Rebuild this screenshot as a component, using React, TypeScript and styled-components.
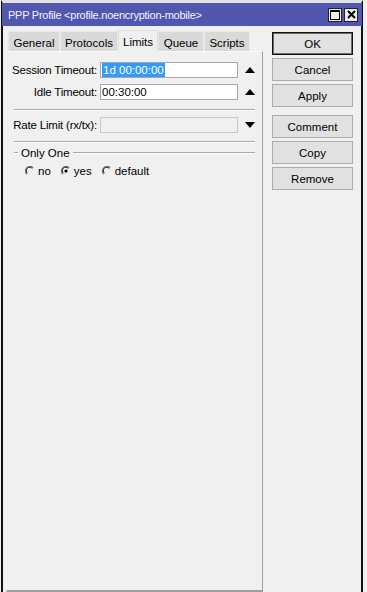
import React from "react";
import styled, { createGlobalStyle } from "styled-components";

const Global = createGlobalStyle`
  html, body { margin: 0; padding: 0; background: #f0f0f0; }
  body { font-family: "Liberation Sans", Arial, sans-serif; font-size: 11px; color: #000; }
`;

const Window = styled.div`
  margin-left: 1px;
  width: 362px;
  height: 600px;
  border-left: 2px solid #111;
  border-right: 2px solid #111;
  border-top: 3px solid #e4e4e4;
  background: #f0f0f0;
  display: flex;
  flex-direction: column;
  box-sizing: border-box;
`;

const TitleBar = styled.div`
  height: 23px;
  background: #5157ae;
  color: #f4f4ff;
  font-size: 11px;
  letter-spacing: -0.25px;
  display: flex;
  align-items: center;
  justify-content: space-between;
  padding: 0 4px 0 6px;
  margin: 0 -1px;
`;

const TitleButtons = styled.div`
  display: flex;
  gap: 2px;
`;

const TitleBtn = styled.div`
  width: 14px;
  height: 14px;
  box-sizing: border-box;
  background: #ececec;
  border: 1px solid #222;
  display: flex;
  align-items: center;
  justify-content: center;
`;

const Body = styled.div`
  display: flex;
  flex: 1;
  padding: 3px 0 0 3px;
  gap: 9px;
  min-height: 0;
`;

const LeftCol = styled.div`
  width: 257px;
  display: flex;
  flex-direction: column;
  padding-bottom: 8px;
`;

const TabRow = styled.div`
  display: flex;
  align-items: flex-end;
  height: 22px;
  padding-left: 2px;
`;

const Tab = styled.div<{ $w: number; $active?: boolean }>`
  width: ${(p) => p.$w}px;
  height: ${(p) => (p.$active ? 22 : 20)}px;
  box-sizing: border-box;
  background: ${(p) => (p.$active ? "#f0f0f0" : "#d9d9d9")};
  border: 1px solid ${(p) => (p.$active ? "#dcdcdc" : "#e9e9e9")};
  border-bottom: none;
  display: flex;
  align-items: center;
  justify-content: center;
  padding-top: ${(p) => (p.$active ? 0 : 2)}px;
  font-size: 11.5px;
  margin-bottom: ${(p) => (p.$active ? -1 : 0)}px;
  position: relative;
  z-index: ${(p) => (p.$active ? 1 : 0)};
`;

const Panel = styled.div`
  flex: 1;
  border-top: 1px solid #fafafa;
  border-left: 1px solid #f6f6f6;
  border-right: 1px solid #a0a0a0;
  border-bottom: 2px solid #a0a0a0;
  padding: 10px 0 0 0;
  display: flex;
  flex-direction: column;
`;

const FieldRow = styled.div<{ $mt?: number }>`
  display: grid;
  grid-template-columns: 90px 138px 17px;
  column-gap: 3px;
  align-items: center;
  height: 16px;
  margin-top: ${(p) => p.$mt ?? 0}px;
`;

const Label = styled.div`
  text-align: right;
  white-space: nowrap;
  font-size: 11.5px;
  letter-spacing: -0.2px;
`;

const Input = styled.div<{ $disabled?: boolean }>`
  height: 16px;
  box-sizing: border-box;
  background: ${(p) => (p.$disabled ? "#f0f0f0" : "#fff")};
  border: 1px solid ${(p) => (p.$disabled ? "#c8c8c8" : "#a6a6a6")};
  display: flex;
  align-items: center;
  padding-left: 1px;
  font-size: 11.5px;
`;

const Selected = styled.span`
  background: #3399ff;
  color: #fff;
  padding: 0 1px;
  line-height: 14px;
`;

const ArrowBox = styled.div`
  display: flex;
  align-items: center;
  justify-content: center;
`;

const Separator = styled.div<{ $mt: number }>`
  margin: ${(p) => p.$mt}px 7px 0 7px;
  border-top: 1px solid #a8a8a8;
  border-bottom: 1px solid #fff;
`;

const GroupHead = styled.div`
  display: flex;
  align-items: center;
  margin: 4px 7px 0 7px;
  gap: 3px;
  font-size: 11.5px;
`;

const GroupLine = styled.div<{ $w?: number }>`
  ${(p) => (p.$w ? `width: ${p.$w}px;` : "flex: 1;")}
  border-top: 1px solid #a8a8a8;
  border-bottom: 1px solid #fff;
`;

const RadioRow = styled.div`
  display: flex;
  align-items: center;
  margin: 6px 0 0 18px;
  gap: 10px;
  font-size: 11.5px;
`;

const RadioItem = styled.label`
  display: flex;
  align-items: center;
  gap: 3px;
`;

const RightCol = styled.div`
  width: 81px;
  display: flex;
  flex-direction: column;
  padding-top: 3px;
`;

const Button = styled.div<{ $default?: boolean; $mt?: number }>`
  height: 23px;
  box-sizing: border-box;
  margin-top: ${(p) => p.$mt ?? 3}px;
  background: #e1e1e1;
  border: 1px solid ${(p) => (p.$default ? "#111" : "#adadad")};
  box-shadow: ${(p) => (p.$default ? "inset 0 0 0 1px #6a6a6a" : "none")};
  display: flex;
  align-items: center;
  justify-content: center;
  font-size: 11.5px;
`;

const Up = () => (
  <svg width="10" height="6" viewBox="0 0 10 6">
    <polygon points="5,0 10,6 0,6" fill="#000" />
  </svg>
);
const Down = () => (
  <svg width="10" height="6" viewBox="0 0 10 6">
    <polygon points="0,0 10,0 5,6" fill="#000" />
  </svg>
);

const Radio = ({ checked }: { checked?: boolean }) => (
  <svg width="10" height="10" viewBox="0 0 10 10">
    <path d="M8.2 1.8 A4.5 4.5 0 1 0 1.8 8.2" fill="none" stroke="#6d6d6d" strokeWidth="1.2" />
    <path d="M7.3 2.7 A3.3 3.3 0 1 0 2.7 7.3" fill="none" stroke="#1a1a1a" strokeWidth="0.9" />
    {checked && <circle cx="5" cy="5" r="1.6" fill="#000" />}
  </svg>
);

export default function App() {
  return (
    <>
      <Global />
      <Window>
        <TitleBar>
          <span>PPP Profile &lt;profile.noencryption-mobile&gt;</span>
          <TitleButtons>
            <TitleBtn>
              <svg width="10" height="10" viewBox="0 0 10 10">
                <rect x="0.5" y="0.5" width="9" height="9" fill="none" stroke="#000" />
                <rect x="0" y="0" width="10" height="2" fill="#000" />
              </svg>
            </TitleBtn>
            <TitleBtn>
              <svg width="9" height="9" viewBox="0 0 9 9">
                <path d="M1 1 L8 8 M8 1 L1 8" stroke="#000" strokeWidth="2" />
              </svg>
            </TitleBtn>
          </TitleButtons>
        </TitleBar>
        <Body>
          <LeftCol>
            <TabRow>
              <Tab $w={52}>General</Tab>
              <Tab $w={58}>Protocols</Tab>
              <Tab $w={40} $active>Limits</Tab>
              <Tab $w={46}>Queue</Tab>
              <Tab $w={46}>Scripts</Tab>
            </TabRow>
            <Panel>
              <FieldRow>
                <Label>Session Timeout:</Label>
                <Input>
                  <Selected>1d 00:00:00</Selected>
                </Input>
                <ArrowBox>
                  <Up />
                </ArrowBox>
              </FieldRow>
              <FieldRow $mt={6}>
                <Label>Idle Timeout:</Label>
                <Input>00:30:00</Input>
                <ArrowBox>
                  <Up />
                </ArrowBox>
              </FieldRow>
              <Separator $mt={9} />
              <FieldRow $mt={6}>
                <Label>Rate Limit (rx/tx):</Label>
                <Input $disabled />
                <ArrowBox>
                  <Down />
                </ArrowBox>
              </FieldRow>
              <Separator $mt={8} />
              <GroupHead>
                <GroupLine $w={4} />
                <span>Only One</span>
                <GroupLine />
              </GroupHead>
              <RadioRow>
                <RadioItem>
                  <Radio />
                  no
                </RadioItem>
                <RadioItem>
                  <Radio checked />
                  yes
                </RadioItem>
                <RadioItem>
                  <Radio />
                  default
                </RadioItem>
              </RadioRow>
            </Panel>
          </LeftCol>
          <RightCol>
            <Button $default $mt={0}>OK</Button>
            <Button>Cancel</Button>
            <Button>Apply</Button>
            <Button $mt={8}>Comment</Button>
            <Button>Copy</Button>
            <Button>Remove</Button>
          </RightCol>
        </Body>
      </Window>
    </>
  );
}
